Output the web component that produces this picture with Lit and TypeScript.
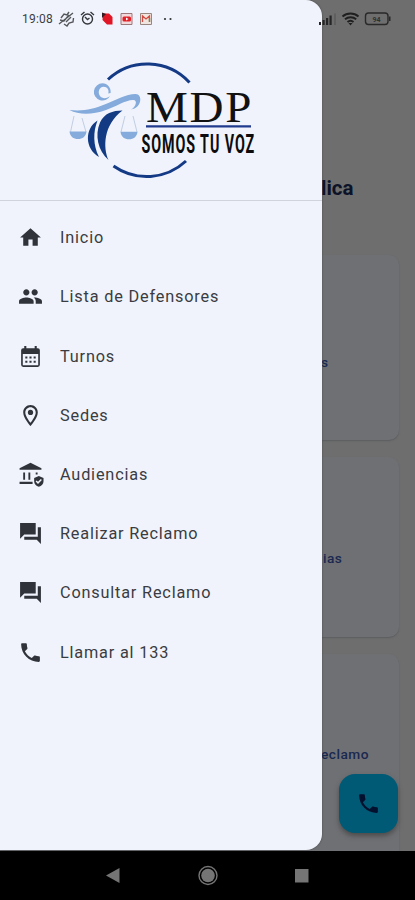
import { LitElement, html, css, svg } from "lit";
import { customElement } from "lit/decorators.js";

const phone = svg`<path d="M6.62 10.79c1.44 2.83 3.76 5.14 6.59 6.59l2.2-2.2c.27-.27.67-.36 1.02-.24 1.12.37 2.33.57 3.57.57.55 0 1 .45 1 1V20c0 .55-.45 1-1 1-9.39 0-17-7.61-17-17 0-.55.45-1 1-1h3.5c.55 0 1 .45 1 1 0 1.25.2 2.45.57 3.57.11.35.03.74-.25 1.02l-2.2 2.2z"/>`;
const forum = svg`<path d="M22 6h-3v9H6v3h12l4 4zM17 13V2H2v15l4-4z"/>`;
const home = svg`<path d="M10 20v-6h4v6h5v-8h3L12 3 2 12h3v8z"/>`;
const group = svg`<path d="M16 11c1.66 0 2.99-1.34 2.99-3S17.66 5 16 5c-1.66 0-3 1.34-3 3s1.34 3 3 3zm-8 0c1.66 0 2.99-1.34 2.99-3S9.66 5 8 5C6.34 5 5 6.34 5 8s1.34 3 3 3zm0 2c-2.33 0-7 1.17-7 3.5V19h14v-2.5c0-2.33-4.67-3.5-7-3.5zm8 0c-.29 0-.62.02-.97.05 1.16.84 1.97 1.97 1.97 3.45V19h6v-2.5c0-2.33-4.67-3.5-7-3.5z"/>`;
const calendar = svg`<path fill-rule="evenodd" d="M19 4h-1V2h-2v2H8V2H6v2H5a2 2 0 0 0-2 2v14a2 2 0 0 0 2 2h14a2 2 0 0 0 2-2V6a2 2 0 0 0-2-2zm.4 16.400H4.600V9.500h14.800zM7 12h2v2H7zm4 0h2v2h-2zm4 0h2v2h-2zm-8 4h2v2H7zm4 0h2v2h-2zm4 0h2v2h-2z"/>`;
const place = svg`<path d="M12 2C8.130 2 5 5.130 5 9c0 5.250 7 13 7 13s7-7.750 7-13c0-3.870-3.130-7-7-7zM7 9c0-2.760 2.240-5 5-5s5 2.240 5 5c0 2.880-2.880 7.190-5 9.880C9.920 16.210 7 11.850 7 9z" fill-rule="evenodd"/><circle cx="12" cy="9" r="2.500"/>`;
const court = svg`<path d="M1.500 6 12 .8 22.500 6v1.500h-21zM5 10h1.800v7H5zM10 10h1.800v7H10zM17 10h1.800v2H17zM1.500 19H14v2H1.500z"/><path fill-rule="evenodd" d="m20 13.500 4.500 1.800v3.200c0 2.600-1.900 4.600-4.500 5.200-2.600-.6-4.500-2.600-4.500-5.200v-3.200zm-.8 7.500 3.700-3.700-1-1-2.700 2.700-1.300-1.300-1 1z"/>`;

const items: [string, unknown][] = [
  ["Inicio", home],
  ["Lista de Defensores", group],
  ["Turnos", calendar],
  ["Sedes", place],
  ["Audiencias", court],
  ["Realizar Reclamo", forum],
  ["Consultar Reclamo", forum],
  ["Llamar al 133", phone],
];

@customElement("mdp-logo")
export class MdpLogo extends LitElement {
  static styles = css`
    :host { display: block; }
    svg { display: block; overflow: visible; }
    .ring { fill: none; stroke: #143a86; stroke-width: 3; }
    .light { fill: #84abdb; }
    .navy { fill: #133b84; }
    .cord { fill: none; stroke: #b4c4dc; stroke-width: 0.8; }
    .name { font: 44px "Liberation Serif", serif; fill: #111; }
    .motto { font: 700 26px Roboto, sans-serif; fill: #0c0c0e; }
  `;
  render() {
    return html`<svg width="205" height="130" viewBox="60 50 205 130">
      <path class="ring" d="M108 79.500A57.500 57.500 0 0 1 189.500 82.500M113.500 166A57.500 57.500 0 0 0 186 161"/>
      <path class="light" fill-rule="evenodd" d="M102.500 83.300a8.600 8.600 0 1 0 7.800 12.200c-3 3.300-8 3.600-10.300.5-2.600-3.500-.8-9 3.500-9.200 3.800-.1 5.800 3.200 4.800 6.700l2.300-.6c.7-5-3.100-9.500-8.100-9.600z"/>
      <path class="light" d="M69.500 110c14 1.500 24-1 35-5.500 10-4 22-10.500 31-10.500 7.500 0 6.500 14-4.500 15.500 5-2.500 7-9.700 2-9.500-8 .3-17 6.500-27 10-14 5-27 5-36.500 0z"/>
      <path class="navy" d="M122.500 110.500c-10 .2-18 2.500-22.500 12-5.500 13-2 28 8.500 37.500-5.500-12-5.500-35 14-49.500z"/>
      <path class="navy" d="M97.500 120.500c-13 8-13 28 1.500 36.500-6-12-6-25-1.500-36.500z"/>
      <path class="cord" d="M74 116l-3.500 16M82 118l4 14M125 116l-4 16M133 116l4 16"/>
      <path class="light" d="M69.500 131.500h17c-.5 5-4 7.500-8.500 7.500s-8-2.500-8.500-7.500zM120.500 131.800H137.500c-.5 5-4 7.500-8.500 7.500s-8-2.500-8.500-7.500z"/>
      <text class="name" transform="translate(146 122) scale(1.07 1)" textLength="98.500" lengthAdjust="spacing">MDP</text>
      <path d="M146 126.300h105" stroke="#203b8d" stroke-width="2.300"/>
      <text class="motto" transform="translate(141.500 153) scale(0.55 1)" textLength="205" lengthAdjust="spacing">SOMOS TU VOZ</text>
    </svg>`;
  }
}

@customElement("app-root")
export class AppRoot extends LitElement {
  static styles = css`
    :host { display: block; font-family: Roboto, sans-serif; }
    .screen { position: relative; width: 415px; height: 900px; overflow: hidden; background: #6e6e6e; display: flex; flex-direction: column; }
    .page { height: 851px; box-sizing: border-box; padding: 176px 16px 0 0; overflow: hidden; }
    .title { margin: 0 0 54px 321px; font-size: 20.5px; line-height: 25px; font-weight: 700; color: #0c1228; }
    .card { height: 185px; margin-bottom: 17px; box-sizing: border-box; padding: 97px 0 0 321px; background: #6f7074; border-radius: 0 10px 10px 0; box-shadow: 0 1px 1.5px #5c5d60; font-size: 13.7px; line-height: 20px; font-weight: 500; color: #1a2850; letter-spacing: 0.5px; }
    .mid { height: 180px; padding-top: 91px; padding-left: 323px; }
    .last { height: 230px; padding-top: 90px; }
    .drawer { position: absolute; left: 0; top: 0; width: 322px; height: 850px; background: #f0f3fc; border-radius: 0 16px 16px 0; box-shadow: 0 0 2px #444; display: flex; flex-direction: column; }
    .head { height: 162.5px; border-bottom: 1.5px solid #d0d3db; padding-left: 60px; padding-top: 12px; box-sizing: border-box; }
    .notice { display: flex; align-items: center; height: 38px; padding-left: 22px; box-sizing: border-box; color: #3c3e43; }
    .time { font-size: 12px; width: 36px; letter-spacing: 0.2px; line-height: 14px; }
    .marks { display: block; }
    .status { position: absolute; left: 318px; top: 10px; display: block; }
    .digits { font: 700 7px Roboto, sans-serif; fill: #303030; }
    .menu { padding-top: 7.6px; }
    .item { display: flex; align-items: center; height: 59.2px; padding-left: 17.5px; gap: 17.5px; font-size: 16.3px; letter-spacing: 0.81px; color: #3a3c41; }
    .item svg { width: 25px; height: 25px; fill: #30333a; flex: none; overflow: visible; }
    .call { position: absolute; left: 339px; top: 774px; width: 59px; height: 59px; border-radius: 16px; background: #005a75; box-shadow: 0 3px 5px #4c4c4c; display: flex; align-items: center; justify-content: center; }
    .call svg { width: 25px; height: 25px; fill: #03112f; }
    .nav { height: 49px; background: #000; }
    .nav svg { display: block; }
  `;
  render() {
    return html`<div class="screen">
      <div class="page">
        <h1 class="title">lica</h1>
        <div class="card">s</div>
        <div class="card mid">ias</div>
        <div class="card last">eclamo</div>
      </div>
      <div class="nav"><svg width="415" height="49" viewBox="0 851 415 49" fill="#757575">
        <path d="M106 875.500 119.500 868v15z"/>
        <circle cx="208" cy="875.500" r="9" fill="none" stroke="#757575" stroke-width="1.400"/><circle cx="208" cy="875.500" r="6.800"/>
        <path d="M295 869h13.500v13.500H295z"/>
      </svg></div>
      <div class="call"><svg viewBox="0 0 24 24">${phone}</svg></div>
      <div class="drawer">
        <div class="notice">
          <span class="time">19:08</span>
          <svg class="marks" width="116" height="20" viewBox="58 9 116 20">
            <g fill="none" stroke="#55575b" stroke-width="1.400"><path d="M59 24 73 13M61 18l3-4 3 1 2-3M64 24l3 2 2-3 4-1 .5-4M60 20l4 1 5-6M66 22l5-5"/>
            <g stroke="#34363a"><circle cx="87.500" cy="19" r="5"/><path d="m81 15 3.500-3M94 15l-3.500-3M85 17l2.500 2.500 2-1.500"/></g></g>
            <path d="M103 13.500h6l3.500 3.500v7.500h-5.500L102.500 20z" fill="#e01525"/><path d="M102 12.500 106 14l-4 4z" fill="#321d22"/>
            <path d="M121 13.500h11v11h-11z" fill="#f2d9dc" stroke="#9b7779"/><rect x="122.500" y="16.500" width="8.500" height="5" rx="1.500" fill="#e22028"/><path d="m126 17.500 2.500 1.500-2.500 1.500z" fill="#fff"/>
            <path d="M140.500 13.500h11v11h-11z" fill="#f1e5df" stroke="#998681"/><path d="M142.500 22v-6l3.500 3 3.500-3v6" fill="none" stroke="#d34a43" stroke-width="1.300"/><path d="M149.500 18v4" stroke="#519652" stroke-width="1.400"/>
            <circle cx="165" cy="19" r="1.100" fill="#333"/><circle cx="170.500" cy="19" r="1.100" fill="#333"/>
          </svg>
        </div>
        <div class="head"><mdp-logo></mdp-logo></div>
        <div class="menu">${items.map(([label, icon]) => html`<div class="item"><svg viewBox="0 0 24 24">${icon}</svg><span>${label}</span></div>`)}</div>
      </div>
      <svg class="status" width="74" height="18" viewBox="318 10 74 18">
        <path d="M319 22h2v3h-2zM322.500 20h2.200v5h-2.200zM326 18h2.200v7H326zM329.500 15.500h2.200V25h-2.200z" fill="#252525"/><path d="M334.500 13.500h1V25h-1z" fill="#505050"/>
        <g fill="none" stroke="#1f1f1f" stroke-width="1.900"><path d="M342.500 16.500c4.500-4 11.500-4 16 0M345 19.300c3.200-2.800 8-2.800 11.200 0M347.500 22c1.900-1.600 4.200-1.600 6 0"/></g><path d="m348.500 23 2 2.500 2-2.500z" fill="#1f1f1f"/>
        <rect x="365.500" y="13" width="22.500" height="11.500" rx="3" fill="none" stroke="#292929" stroke-width="1.400"/><path d="M389 16.500h1.500v4.500H389z" fill="#292929"/><text class="digits" x="372.500" y="21.500">94</text>
      </svg>
    </div>`;
  }
}
